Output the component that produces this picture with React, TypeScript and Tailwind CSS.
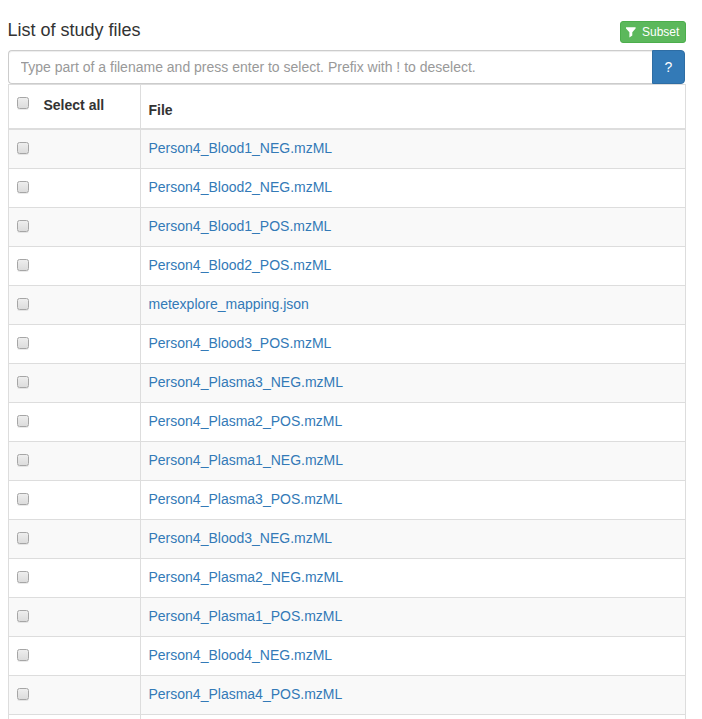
const files = [
  'Person4_Blood1_NEG.mzML',
  'Person4_Blood2_NEG.mzML',
  'Person4_Blood1_POS.mzML',
  'Person4_Blood2_POS.mzML',
  'metexplore_mapping.json',
  'Person4_Blood3_POS.mzML',
  'Person4_Plasma3_NEG.mzML',
  'Person4_Plasma2_POS.mzML',
  'Person4_Plasma1_NEG.mzML',
  'Person4_Plasma3_POS.mzML',
  'Person4_Blood3_NEG.mzML',
  'Person4_Plasma2_NEG.mzML',
  'Person4_Plasma1_POS.mzML',
  'Person4_Blood4_NEG.mzML',
  'Person4_Plasma4_POS.mzML',
];

function Checkbox({ label }: { label: string }) {
  return (
    <input
      type="checkbox"
      aria-label={label}
      className="block size-3 shrink-0 appearance-none rounded-[2.5px] border border-[#a6a6a6] bg-linear-to-b from-[#eeeeee] to-[#dcdcdc] shadow-[0_1px_0_rgba(0,0,0,0.08)] checked:bg-[#337ab7]"
    />
  );
}

export default function App() {
  return (
    <div className="h-[719px] w-[702px] overflow-hidden bg-white pl-2 pr-4 pt-[17px] font-['Liberation_Sans',Arial,sans-serif] text-[14px] leading-5 text-[#333]">
      <header className="flex h-[33px] items-start justify-between">
        <h1 className="-ml-[0.5px] text-[18px] leading-[26px]">List of study files</h1>
        <button className="mt-1 flex h-[22px] w-[66px] items-center gap-[5px] rounded-[3px] border border-[#4cae4c] bg-[#5cb85c] pl-[4px] text-[12px] leading-[18px] text-white">
          <svg viewBox="0 0 12 12" className="size-3" fill="currentColor">
            <path d="M1 1.3h9.6v1.2L7.3 6.2v3.4L4.4 11.4V6.2L1 2.5z" />
          </svg>
          Subset
        </button>
      </header>
      <div className="flex h-[34px] w-[677px]">
        <input
          placeholder="Type part of a filename and press enter to select. Prefix with ! to deselect."
          className="min-w-0 flex-1 rounded-l-[4px] border border-r-0 border-[#ccc] px-[11.5px] text-[14px] shadow-[inset_0_1px_1px_rgba(0,0,0,0.075)] outline-none placeholder:text-[#999]"
        />
        <button className="w-[33px] rounded-r-[4px] border border-[#2e6da4] bg-[#337ab7] text-white">?</button>
      </div>
      <div className="w-[678px] border-x border-t border-[#ddd]">
        <div className="flex h-[45px] border-b-2 border-[#ddd] font-bold">
          <div className="flex w-[132px] gap-[14.5px] border-r border-[#ddd] pl-2 pt-[10px]">
            <div className="pt-[2px]"><Checkbox label="Select all" /></div>
            <span>Select all</span>
          </div>
          <div className="pl-[7.5px] pt-[15px]">File</div>
        </div>
        {files.map((file) => (
          <div key={file} className="flex h-[39px] border-b border-[#ddd] odd:bg-white even:bg-[#f9f9f9]">
            <div className="w-[132px] border-r border-[#ddd] pl-2 pt-3">
              <Checkbox label={file} />
            </div>
            <a href="#" className="pl-[7.5px] pt-2 text-[#337ab7]">{file}</a>
          </div>
        ))}
        <div className="flex h-[39px] bg-white">
          <div className="w-[132px] border-r border-[#ddd]" />
        </div>
      </div>
    </div>
  );
}
